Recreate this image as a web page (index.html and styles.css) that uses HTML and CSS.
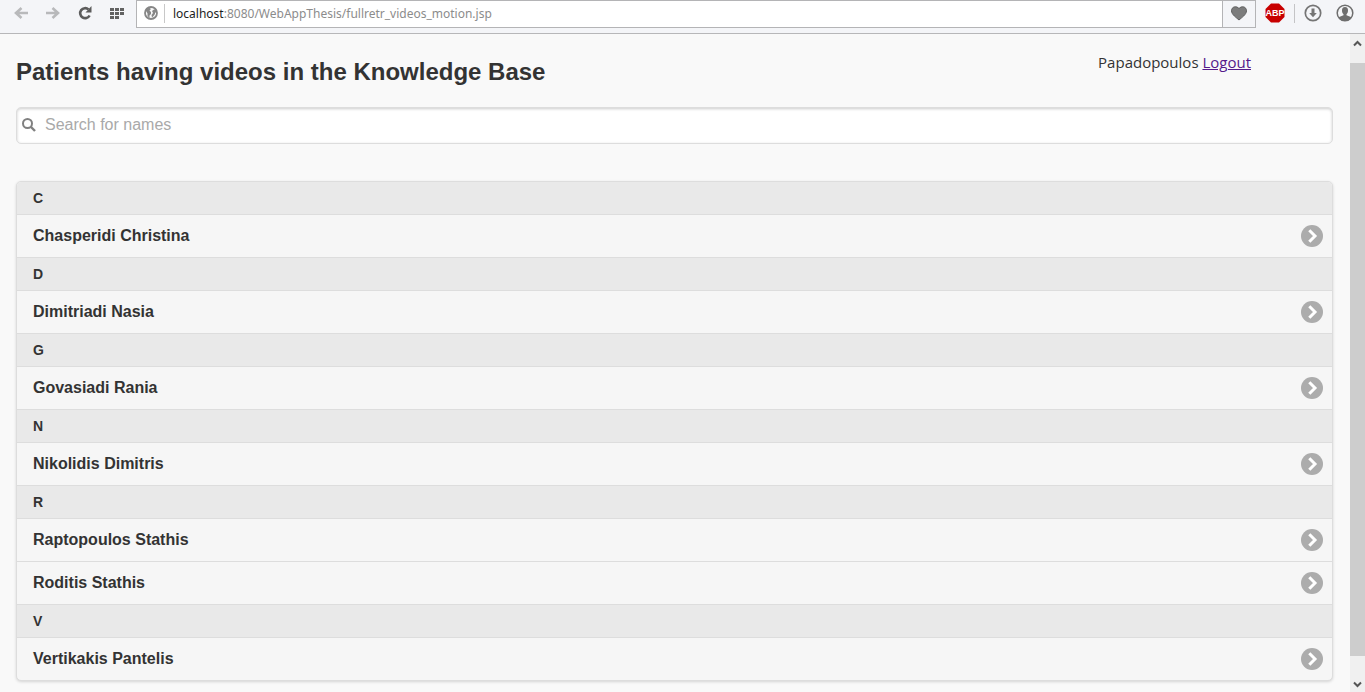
FILE: index.html
```html
<!DOCTYPE html>
<html lang="en">
<head>
<meta charset="utf-8">
<title>Patients having videos in the Knowledge Base</title>
<link rel="stylesheet" href="styles.css">
</head>
<body>
<svg class="sprite" aria-hidden="true">
  <symbol id="chevron" viewBox="0 0 22 22">
    <circle cx="11" cy="11" r="11" fill="#acacac"/>
    <path d="M8.300 5.200L14 11l-5.700 5.800" fill="none" stroke="#fff" stroke-width="3"/>
  </symbol>
</svg>

<header class="toolbar">
  <nav class="nav-buttons" aria-label="Browser">
    <button class="tool" type="button" aria-label="Back"><svg width="14" height="12" viewBox="0 0 14 12"><path d="M14 6H3M7.500 1L2 6l5.500 5" fill="none" stroke="#b8b9bb" stroke-width="2.600"/></svg></button>
    <button class="tool" type="button" aria-label="Forward"><svg width="14" height="12" viewBox="0 0 14 12"><path d="M0 6h11M6.500 1L12 6l-5.500 5" fill="none" stroke="#b8b9bb" stroke-width="2.600"/></svg></button>
    <button class="tool" type="button" aria-label="Reload"><svg width="14" height="14" viewBox="0 0 14 14"><path d="M10.500 3.400A5 5 0 1 0 11.600 9.500" fill="none" stroke="#5c5c5c" stroke-width="2.600"/><path d="M13.500 0v6.500H7.500z" fill="#5c5c5c"/></svg></button>
    <button class="tool" type="button" aria-label="Speed dial"><svg width="14" height="11" viewBox="0 0 14 11" fill="#626262"><path d="M0 0h4v3H0zM5 0h4v3H5zM10 0h4v3h-4zM0 4h4v3H0zM5 4h4v3H5zM10 4h4v3h-4zM0 8h4v3H0zM5 8h4v3H5z"/></svg></button>
  </nav>
  <div class="address">
    <button class="site" type="button" aria-label="Site information"><svg width="14" height="14" viewBox="0 0 14 14"><circle cx="7" cy="7" r="6" fill="#f8f8f8" stroke="#868686" stroke-width="1.800"/><path d="M1.500 4L5 1.500 7 3 5.500 4.500 7 6v2L5.500 9.500V12L3.500 10V7.500zM8 5l2-1.500h2.500L13 7l-2-.5V8L9.500 10 8 11.500 7.500 9 9 7z" fill="#868686"/></svg></button>
    <div class="url" role="textbox" contenteditable="true" spellcheck="false" aria-label="Address"><span class="host">localhost</span>:8080/WebAppThesis/fullretr_videos_motion.jsp</div>
    <button class="heart" type="button" aria-label="Bookmark"><svg width="16" height="15" viewBox="0 0 16 15"><path d="M8 14C5.500 11.800.5 8.500.5 4.800.5.600 5.500-.6 8 2.600c2.500-3.200 7.500-2 7.500 2.200C15.500 8.500 10.500 11.800 8 14z" fill="#7c7c7c" stroke="#5e5e5e"/></svg></button>
  </div>
  <div class="extras">
    <button class="abp" type="button" aria-label="ABP"><svg width="20" height="20" viewBox="0 0 20 20"><path d="M6 .5h8L19.500 6v8L14 19.500H6L.5 14V6z" fill="#c80000"/><text class="abp-text" x="10" y="13" text-anchor="middle">ABP</text></svg></button>
    <span class="divider"></span>
    <button class="tool" type="button" aria-label="Downloads"><svg width="18" height="18" viewBox="0 0 18 18"><circle cx="9" cy="9" r="7.700" fill="none" stroke="#757575" stroke-width="1.700"/><path d="M7.500 4.500h3V9h2.300L9 13.200 5.200 9h2.300z" fill="#757575"/></svg></button>
    <button class="tool" type="button" aria-label="Account"><svg width="18" height="18" viewBox="0 0 18 18"><circle cx="9" cy="9" r="7.800" fill="#f4f5f7" stroke="#6e6e6e" stroke-width="1.500"/><path d="M9 3C6.800 3 6 4.500 6 6.500c0 1.700.6 2.900 1.500 3.700v1.100L2.500 13.200C4 16 6.500 17 9 17s5-1 6.500-3.800l-5-1.900v-1.100C11.400 9.400 12 8.200 12 6.500 12 4.500 11.200 3 9 3z" fill="#6e6e6e"/></svg></button>
  </div>
</header>

<div class="viewport">
  <main class="page">
    <div class="heading">
      <h1>Patients having videos in the Knowledge Base</h1>
      <p class="account">Papadopoulos <a href="#logout">Logout</a></p>
    </div>
    <label class="search">
      <svg width="14" height="14" viewBox="0 0 14 14" aria-hidden="true"><circle cx="5.500" cy="5.500" r="4.500" fill="none" stroke="#808080" stroke-width="2"/><path d="M9 9l4 4" stroke="#808080" stroke-width="2.400"/></svg>
      <input type="search" placeholder="Search for names" aria-label="Search for names">
    </label>
    <ul class="patients">
      <li class="letter">C</li>
      <li><a href="#chasperidi">Chasperidi Christina<svg class="go"><use href="#chevron"/></svg></a></li>
      <li class="letter">D</li>
      <li><a href="#dimitriadi">Dimitriadi Nasia<svg class="go"><use href="#chevron"/></svg></a></li>
      <li class="letter">G</li>
      <li><a href="#govasiadi">Govasiadi Rania<svg class="go"><use href="#chevron"/></svg></a></li>
      <li class="letter">N</li>
      <li><a href="#nikolidis">Nikolidis Dimitris<svg class="go"><use href="#chevron"/></svg></a></li>
      <li class="letter">R</li>
      <li><a href="#raptopoulos">Raptopoulos Stathis<svg class="go"><use href="#chevron"/></svg></a></li>
      <li><a href="#roditis">Roditis Stathis<svg class="go"><use href="#chevron"/></svg></a></li>
      <li class="letter">V</li>
      <li><a href="#vertikakis">Vertikakis Pantelis<svg class="go"><use href="#chevron"/></svg></a></li>
    </ul>
  </main>
  <div class="scrollbar" aria-hidden="true">
    <svg width="9" height="7" viewBox="0 0 9 7"><path d="M1 5.500L4.500 2 8 5.500" fill="none" stroke="#555" stroke-width="2"/></svg>
    <div class="thumb"></div>
    <svg width="9" height="7" viewBox="0 0 9 7"><path d="M1 1.500L4.500 5 8 1.500" fill="none" stroke="#555" stroke-width="2"/></svg>
  </div>
</div>
</body>
</html>
```
FILE: styles.css
```css
* { box-sizing: border-box; }

body {
  margin: 0;
  height: 100vh;
  display: flex;
  flex-direction: column;
  overflow: hidden;
  background: #f9f9f9;
  color: #333;
  font: 16px/20px "Liberation Sans", Arial, sans-serif;
}

button {
  display: flex;
  align-items: center;
  justify-content: center;
  padding: 0;
  border: 0;
  background: none;
}

svg { display: block; flex: none; }
.sprite { position: absolute; width: 0; height: 0; }

.toolbar {
  flex: none;
  display: flex;
  padding-bottom: 5px;
  background: #f4f5f8;
  border-bottom: 1px solid #b7b7b9;
}

.nav-buttons { display: flex; align-items: flex-start; padding-left: 5px; width: 136px; }
.nav-buttons .tool { width: 32px; height: 26px; }

.address {
  flex: 1;
  display: flex;
  height: 28px;
  min-width: 0;
  background: #fff;
  border: 1px solid #b4b4b6;
}

.site {
  width: 28px;
  margin: 3px 0 4px;
  padding-bottom: 2px;
  border-right: 1px solid #c8c8c8;
}

.url {
  flex: 1;
  padding-left: 8px;
  overflow: hidden;
  color: #8c8c8c;
  font: 12px/26px "Noto Sans", "Open Sans", sans-serif;
  white-space: nowrap;
}
.host { color: #1c1c1c; }

.heart {
  width: 33px;
  padding-bottom: 2px;
  background: #f4f5f8;
  border-left: 1px solid #b4b4b6;
}

.extras { display: flex; align-items: flex-start; padding: 0 4px 0 5px; }
.extras button { height: 26px; }
.extras .tool { width: 32px; }
.abp { width: 28px; }
.abp-text { font: bold 9px "Liberation Sans", sans-serif; fill: #fff; }
.divider { width: 1px; height: 19px; margin: 4px 2px 0 5px; background: #c4c4c6; }

.viewport { flex: 1; display: flex; min-height: 0; }

.page { flex: 1; min-width: 0; padding: 22px 17px 0 16px; }

.heading { display: flex; justify-content: space-between; align-items: flex-start; }

h1 { margin: 0; font-size: 24px; line-height: 32px; }

.account {
  margin: 0;
  padding-right: 82px;
  color: #333;
  font: 15px/12px "Open Sans", "Noto Sans", sans-serif;
}
.account a { color: #551a8b; }

.search {
  display: flex;
  align-items: center;
  height: 37px;
  margin: 19px 0 37px;
  padding: 0 0 2px 5px;
  background: #fff;
  border: 1px solid #ddd;
  border-radius: 5px;
  box-shadow: inset 0 1px 3px rgba(0, 0, 0, .2);
}

.search input {
  flex: 1;
  height: 32px;
  padding: 0 9px;
  border: 0;
  outline: 0;
  background: none;
  color: #333;
  font: inherit;
}
.search input::placeholder { color: #a9a9a9; }

.patients {
  margin: 0;
  padding: 0;
  list-style: none;
  background: #f6f6f6;
  border: 1px solid #ddd;
  border-radius: 5px;
  box-shadow: 0 1px 3px rgba(0, 0, 0, .15);
  font-weight: bold;
  overflow: hidden;
}

.patients li + li { border-top: 1px solid #ddd; }

.letter {
  padding: 6px 16px;
  background: #e9e9e9;
  font-size: 14px;
}

.patients a {
  display: flex;
  align-items: center;
  justify-content: space-between;
  padding: 10px 9px 10px 16px;
  color: #333;
  text-decoration: none;
}

.go { width: 22px; height: 22px; }

.scrollbar {
  width: 15px;
  display: flex;
  flex-direction: column;
  align-items: center;
  padding: 6px 0 4px;
  background: #f0f0f0;
}
.thumb { flex: 1; width: 100%; margin: 16px 0 25px; background: #cdcdcd; }
```
